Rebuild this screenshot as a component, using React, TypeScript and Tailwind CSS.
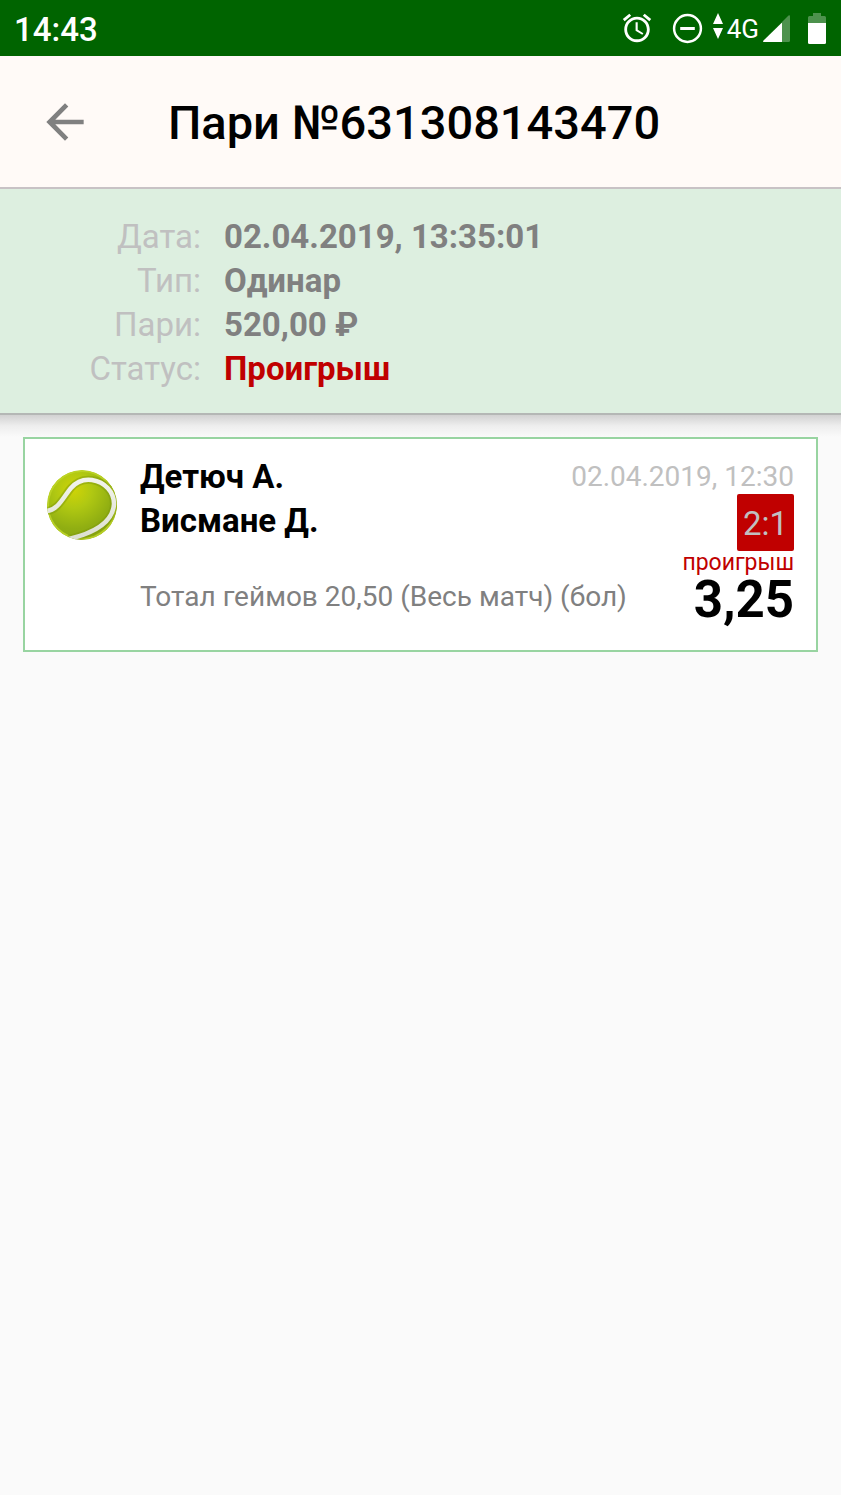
import { ReactNode } from "react";

interface Detail {
  label: string;
  value: string;
  lost?: boolean;
}

const details: Detail[] = [
  { label: "Дата:", value: "02.04.2019, 13:35:01" },
  { label: "Тип:", value: "Одинар" },
  { label: "Пари:", value: "520,00 ₽" },
  { label: "Статус:", value: "Проигрыш", lost: true },
];

function StatusBar() {
  return (
    <div className="flex h-14 items-center justify-between bg-[#006400] pl-[14px] pr-[15px] text-white">
      <span className="pt-1 text-[33px] font-medium">14:43</span>
      <div className="flex items-center">
        {/* Alarm */}
        <svg width="34" height="34" viewBox="0 0 24 24" fill="currentColor">
          <path d="M22 5.72l-4.6-3.86-1.29 1.53 4.6 3.86L22 5.72zM7.88 3.39L6.6 1.86 2 5.71l1.29 1.53 4.59-3.85zM12.5 8H11v6l4.75 2.85.75-1.23-4-2.37V8zM12 4c-4.97 0-9 4.03-9 9s4.02 9 9 9c4.97 0 9-4.03 9-9s-4.03-9-9-9zm0 16c-3.87 0-7-3.13-7-7s3.13-7 7-7 7 3.13 7 7-3.13 7-7 7z" />
        </svg>
        {/* Do not disturb */}
        <svg className="ml-4" width="35" height="35" viewBox="0 0 24 24" fill="none" stroke="currentColor" strokeWidth="1.7">
          <circle cx="12" cy="12" r="9.2" />
          <path d="M7 12h10" strokeWidth="2.1" />
        </svg>
        {/* Mobile data */}
        <svg className="mb-1 ml-2" width="10" height="26" viewBox="0 0 10 26" fill="currentColor">
          <path d="M5 0l5 11H0zM5 26l5-11H0z" />
        </svg>
        <span className="ml-1 pt-0.5 text-[26px]">4G</span>
        <svg className="ml-1" width="27" height="27" viewBox="0 0 27 27" fill="currentColor">
          <path d="M27 1.5v24q0 1.5-1.5 1.5H19V7l6.5-6.5Q27-.5 27 1.5z" opacity="0.3" />
          <path d="M19 7.500V27H1Q-.5 27 .5 25.500z" />
        </svg>
        <svg className="ml-[18px]" width="18" height="31" viewBox="0 0 18 31" fill="currentColor">
          <path d="M5 0h8v3h3.500Q18 3 18 4.500V10H0V4.500Q0 3 1.500 3H5z" opacity="0.3" />
          <path d="M0 10h18v19.500q0 1.500-1.500 1.500h-15Q0 31 0 29.500z" />
        </svg>
      </div>
    </div>
  );
}

function TennisBall() {
  return (
    <svg className="mt-[15px]" width="70" height="70" viewBox="0 0 70 70">
      <defs>
        <radialGradient id="felt" cx="0.38" cy="0.28" r="0.75">
          <stop offset="0" stopColor="#cfd406" />
          <stop offset="0.35" stopColor="#b0c812" />
          <stop offset="0.75" stopColor="#90ae12" />
          <stop offset="1" stopColor="#8ba80f" />
        </radialGradient>
        <linearGradient id="seam" x1="0" y1="0" x2="0" y2="1">
          <stop offset="0" stopColor="#f2f3ec" />
          <stop offset="1" stopColor="#dcdfd0" />
        </linearGradient>
        <clipPath id="ball">
          <circle cx="35" cy="35" r="35" />
        </clipPath>
      </defs>
      <g clipPath="url(#ball)" fill="none">
        <circle cx="35" cy="35" r="35" fill="url(#felt)" />
        <circle cx="35" cy="35" r="34" stroke="#bfd62a" strokeWidth="2" opacity="0.8" />
        <path d="M-1 41C11 41 17 26 24 18C31 10 38 9 45 10C58 12 67 22 67 34C66 51 51 62 22 69" stroke="#7d970e" strokeWidth="8" opacity="0.45" />
        <path d="M-1 41C11 41 17 26 24 18C31 10 38 9 45 10C58 12 67 22 67 34C66 51 51 62 22 69" stroke="url(#seam)" strokeWidth="4.500" />
      </g>
    </svg>
  );
}

function Team({ children }: { children: ReactNode }) {
  return <div className="text-[33px] font-bold leading-11">{children}</div>;
}

export default function App() {
  return (
    <div className="min-h-screen bg-[#fafafa] font-[Roboto,sans-serif] text-black">
      <StatusBar />

      <header className="flex h-[133px] items-center border-b-2 border-[#c8c2c5] bg-[#fffaf7] pl-[37px]">
        <button type="button" aria-label="Назад" className="text-[#808080]">
          <svg width="56" height="56" viewBox="0 0 24 24" fill="currentColor">
            <path d="M20 11H7.83l5.590-5.590L12 4l-8 8 8 8 1.410-1.410L7.830 13H20v-2z" />
          </svg>
        </button>
        <h1 className="ml-[75px] pt-1 text-[47px] font-medium">Пари №631308143470</h1>
      </header>

      {/* Bet details */}
      <dl className="border-b-2 border-[#b4b7b5] bg-[#ddefe0] pb-[22px] pt-[26px] text-[33px] leading-11">
        {details.map((item) => (
          <div key={item.label} className="flex gap-[23px]">
            <dt className="w-[201px] text-right text-[#c0c0c0]">{item.label}</dt>
            <dd className={item.lost ? "font-bold text-[#c00000]" : "font-bold text-[#808080]"}>
              {item.value}
            </dd>
          </div>
        ))}
      </dl>
      <div className="h-[22px] bg-linear-to-b from-[#d2d2d2] via-[#eeeeee] to-[#fafafa]" />

      {/* Event */}
      <main className="px-[23px]">
        <article className="flex gap-[23px] border-2 border-[#98d4a1] bg-white px-[22px] pb-[25px] pt-4">
          <TennisBall />
          <div className="flex-1">
            <div className="flex justify-between">
              <div>
                <Team>Детюч А.</Team>
                <Team>Висмане Д.</Team>
              </div>
              <div className="flex flex-col items-end pt-1">
                <time className="text-[28px] leading-[35px] text-[#c0c0c0]">02.04.2019, 12:30</time>
                <span className="flex size-[57px] items-center justify-center rounded-xs bg-[#c00000] pt-0.5 text-[33px] text-[#c0c0c0]">
                  2:1
                </span>
              </div>
            </div>
            <div className="flex justify-between">
              <p className="pt-7 text-[28px] leading-[35px] text-[#808080]">
                Тотал геймов 20,50 (Весь матч) (бол)
              </p>
              <div className="text-right">
                <div className="text-[23px] leading-6 text-[#c00000]">проигрыш</div>
                <div className="text-[51px] font-bold leading-[50px]">3,25</div>
              </div>
            </div>
          </div>
        </article>
      </main>
    </div>
  );
}
